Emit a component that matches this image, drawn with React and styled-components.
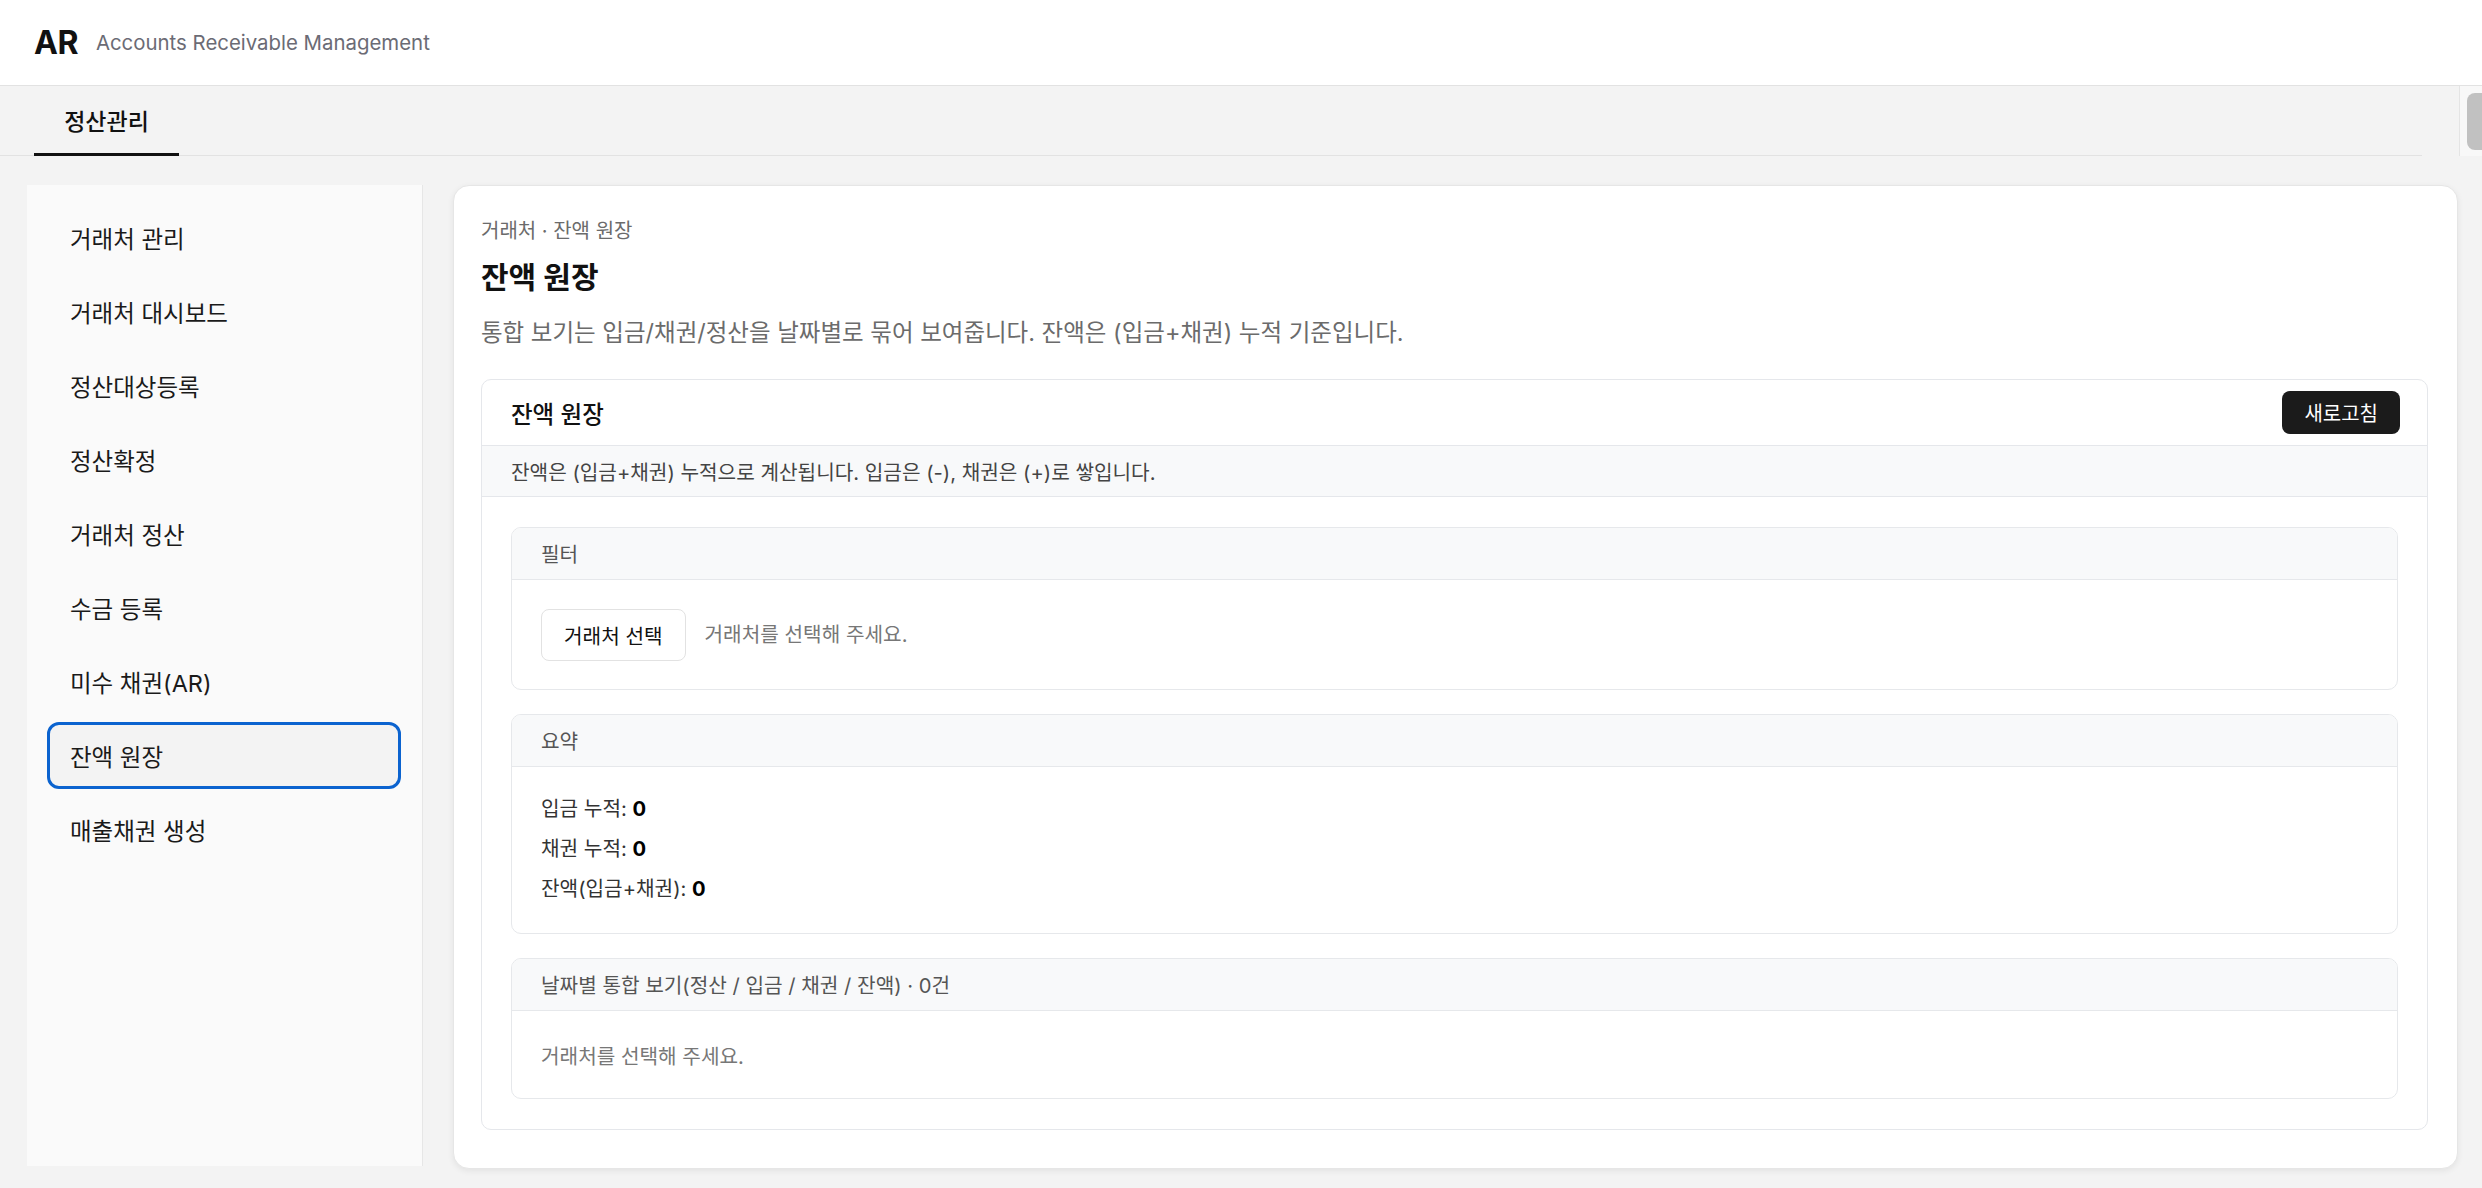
import React from 'react';
import styled, { createGlobalStyle } from 'styled-components';

const GlobalStyle = createGlobalStyle`
  * { box-sizing: border-box; }
  body {
    margin: 0;
    background: #f3f3f3;
    font-family: Inter, "Noto Sans CJK KR", "Noto Sans", sans-serif;
    color: #111;
  }
`;

const Page = styled.div`
  display: flex;
  flex-direction: column;
  min-height: 100vh;
  background: #f3f3f3;
`;

const Header = styled.header`
  display: flex;
  align-items: center;
  height: 86px;
  padding: 0 34px;
  background: #fff;
  border-bottom: 1px solid #e2e2e2;
`;

const Logo = styled.div`
  font-size: 32px;
  font-weight: 700;
  letter-spacing: -0.5px;
  color: #111;
`;

const Subtitle = styled.div`
  margin-left: 18px;
  font-size: 20.4px;
  color: #6b6b75;
`;

const TabStrip = styled.div`
  display: flex;
  height: 70px;
  background: #f3f3f3;
`;

const TabNav = styled.nav`
  display: flex;
  flex: 1;
  margin-right: 37px;
  border-bottom: 1px solid #e2e2e2;
`;

const Tab = styled.div`
  display: flex;
  align-items: center;
  justify-content: center;
  width: 145px;
  margin-left: 34px;
  margin-bottom: -1px;
  font-size: 23px;
  font-weight: 500;
  color: #111;
  border-bottom: 3px solid ${({ $active }) => ($active ? '#111' : 'transparent')};
`;

/* the tab strip's own vertical scrollbar */
const ScrollTrack = styled.div`
  flex: 0 0 23px;
  padding: 7px 0 6px 7px;
  background: #f8f8f8;
  border-left: 1px solid #e4e4e4;
`;

const ScrollThumb = styled.div`
  height: 100%;
  background: #c1c1c1;
  border-radius: 8px 0 0 8px;
`;

const Main = styled.div`
  display: flex;
  align-items: flex-start;
  gap: 30px;
  padding: 29px 24px 22px 27px;
`;

const Sidebar = styled.aside`
  display: flex;
  flex-direction: column;
  gap: 7px;
  flex: 0 0 396px;
  height: 981px;
  padding: 19px 21px 0 20px;
  background: #fafafa;
  border-right: 1px solid #e6e6e6;
`;

const NavItem = styled.div`
  display: flex;
  align-items: center;
  height: 67px;
  padding-left: 20px;
  border: 3px solid ${({ $active }) => ($active ? '#0b63cf' : 'transparent')};
  border-radius: 12px;
  background: ${({ $active }) => ($active ? '#f3f3f3' : 'transparent')};
  font-size: 23.5px;
  color: #1a1a1a;
`;

const Card = styled.section`
  flex: 1;
  padding: 32px 29px 38px 27px;
  background: #fff;
  border: 1px solid #e6e6e6;
  border-radius: 16px;
  box-shadow: 0 2px 6px rgba(0, 0, 0, 0.07);
`;

const Breadcrumb = styled.div`
  font-size: 20px;
  line-height: 27px;
  color: #6b6b6b;
`;

const Title = styled.h1`
  margin: 12px 0 0;
  font-size: 30px;
  line-height: 40px;
  font-weight: 700;
  color: #111;
`;

const Description = styled.p`
  margin: 19px 0 0;
  font-size: 23.5px;
  line-height: 34px;
  color: #6b6b6b;
`;

const Panel = styled.div`
  margin-top: 29px;
  border: 1px solid #e5e7eb;
  border-radius: 10px;
  overflow: hidden;
`;

const PanelHeader = styled.div`
  display: flex;
  align-items: center;
  justify-content: space-between;
  height: 66px;
  padding: 0 27px 0 29px;
  border-bottom: 1px solid #e5e7eb;
`;

const PanelTitle = styled.div`
  font-size: 23.5px;
  font-weight: 500;
  color: #111;
`;

const DarkButton = styled.button`
  height: 43px;
  padding: 0 22px;
  border: none;
  border-radius: 8px;
  background: #1b1b1b;
  color: #fff;
  font-family: inherit;
  font-size: 20px;
`;

const InfoRow = styled.div`
  display: flex;
  align-items: center;
  height: 51px;
  padding-left: 29px;
  background: #f8f9fa;
  border-bottom: 1px solid #e5e7eb;
  font-size: 20.2px;
  color: #444;
`;

const PanelBody = styled.div`
  display: flex;
  flex-direction: column;
  gap: 24px;
  padding: 30px 29px;
`;

const SubPanel = styled.div`
  border: 1px solid #e6e8eb;
  border-radius: 10px;
  overflow: hidden;
`;

const SubHeader = styled.div`
  display: flex;
  align-items: center;
  height: 52px;
  padding-left: 29px;
  background: #f8f9fa;
  border-bottom: 1px solid #e6e8eb;
  font-size: 20.2px;
  color: #555;
`;

const SubBody = styled.div`
  display: flex;
  flex-direction: ${({ $column }) => ($column ? 'column' : 'row')};
  align-items: ${({ $column }) => ($column ? 'flex-start' : 'center')};
  gap: ${({ $column }) => ($column ? '10px' : '19px')};
  padding: ${({ $pad }) => $pad || '29px 29px 28px'};
  font-size: 20.2px;
  line-height: 30px;
`;

const OutlineButton = styled.button`
  height: 52px;
  padding: 0 22px;
  border: 1px solid #e2e2e2;
  border-radius: 8px;
  background: #fff;
  color: #111;
  font-family: inherit;
  font-size: 20.2px;
`;

const Hint = styled.span`
  color: #777;
`;

const StatLine = styled.div`
  color: #333;
  b {
    font-weight: 700;
    color: #000;
  }
`;

const menu = [
  '거래처 관리',
  '거래처 대시보드',
  '정산대상등록',
  '정산확정',
  '거래처 정산',
  '수금 등록',
  '미수 채권(AR)',
  '잔액 원장',
  '매출채권 생성',
];

const stats = [
  ['입금 누적', 0],
  ['채권 누적', 0],
  ['잔액(입금+채권)', 0],
];

export default function App() {
  return (
    <Page>
      <GlobalStyle />
      <Header>
        <Logo>AR</Logo>
        <Subtitle>Accounts Receivable Management</Subtitle>
      </Header>
      <TabStrip>
        <TabNav>
          <Tab $active>정산관리</Tab>
        </TabNav>
        <ScrollTrack>
          <ScrollThumb />
        </ScrollTrack>
      </TabStrip>
      <Main>
        <Sidebar>
          {menu.map((m) => (
            <NavItem key={m} $active={m === '잔액 원장'}>{m}</NavItem>
          ))}
        </Sidebar>
        <Card>
          <Breadcrumb>거래처 · 잔액 원장</Breadcrumb>
          <Title>잔액 원장</Title>
          <Description>
            통합 보기는 입금/채권/정산을 날짜별로 묶어 보여줍니다. 잔액은 (입금+채권) 누적 기준입니다.
          </Description>
          <Panel>
            <PanelHeader>
              <PanelTitle>잔액 원장</PanelTitle>
              <DarkButton>새로고침</DarkButton>
            </PanelHeader>
            <InfoRow>잔액은 (입금+채권) 누적으로 계산됩니다. 입금은 (-), 채권은 (+)로 쌓입니다.</InfoRow>
            <PanelBody>
              <SubPanel>
                <SubHeader>필터</SubHeader>
                <SubBody>
                  <OutlineButton>거래처 선택</OutlineButton>
                  <Hint>거래처를 선택해 주세요.</Hint>
                </SubBody>
              </SubPanel>
              <SubPanel>
                <SubHeader>요약</SubHeader>
                <SubBody $column $pad="27px 29px 29px">
                  {stats.map(([label, value]) => (
                    <StatLine key={label}>
                      {label}: <b>{value}</b>
                    </StatLine>
                  ))}
                </SubBody>
              </SubPanel>
              <SubPanel>
                <SubHeader>날짜별 통합 보기(정산 / 입금 / 채권 / 잔액) · 0건</SubHeader>
                <SubBody $pad="31px 29px 26px">
                  <Hint>거래처를 선택해 주세요.</Hint>
                </SubBody>
              </SubPanel>
            </PanelBody>
          </Panel>
        </Card>
      </Main>
    </Page>
  );
}
